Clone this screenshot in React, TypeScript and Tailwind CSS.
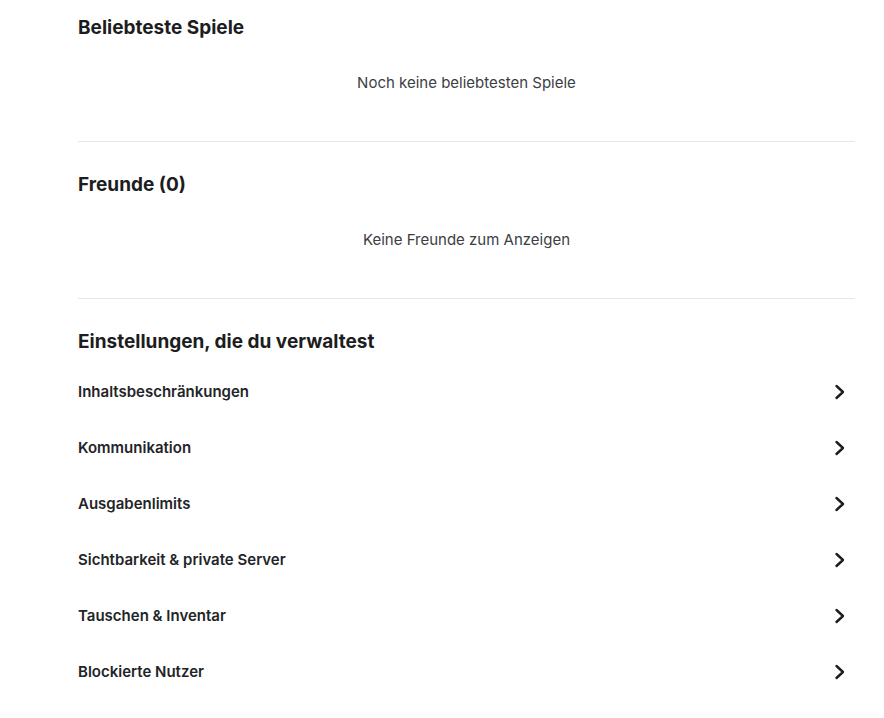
import React from 'react';

const settings = [
  'Inhaltsbeschränkungen',
  'Kommunikation',
  'Ausgabenlimits',
  'Sichtbarkeit & private Server',
  'Tauschen & Inventar',
  'Blockierte Nutzer',
];

const Chevron: React.FC = () => (
  <svg width="14" height="16" viewBox="0 0 14 16" fill="none" className="shrink-0">
    <path d="M3.5 2 L10 8 L3.5 14" stroke="#1c1d20" strokeWidth="2.4" strokeLinecap="round" strokeLinejoin="round" />
  </svg>
);

const EmptySection: React.FC<{ title: string; message: string }> = ({ title, message }) => (
  <section className="border-b border-[#e6e6e8]">
    <h2 className="h-[28px] text-[19px] leading-[28px] font-bold text-[#1c1d20]">{title}</h2>
    <p className="mt-[29px] mb-[46px] text-center text-[15px] leading-[24px] text-[#3c3e42]">{message}</p>
  </section>
);

export default function App() {
  return (
    <div className="min-h-screen bg-white font-['Inter',sans-serif]">
      <div className="ml-[78px] mr-[29px] pt-[14px]">
        <EmptySection title="Beliebteste Spiele" message="Noch keine beliebtesten Spiele" />
        <div className="pt-[29px]">
          <EmptySection title="Freunde (0)" message="Keine Freunde zum Anzeigen" />
        </div>

        <section className="pt-[29px]">
          <h2 className="h-[28px] text-[19px] leading-[28px] font-bold text-[#1c1d20]">Einstellungen, die du verwaltest</h2>
          <ul className="mt-[8px]">
            {settings.map((label) => (
              <li key={label} className="h-[56px] flex items-center justify-between pr-[8px]">
                <span className="text-[15px] font-semibold text-[#232427]">{label}</span>
                <Chevron />
              </li>
            ))}
          </ul>
        </section>
      </div>
    </div>
  );
}
